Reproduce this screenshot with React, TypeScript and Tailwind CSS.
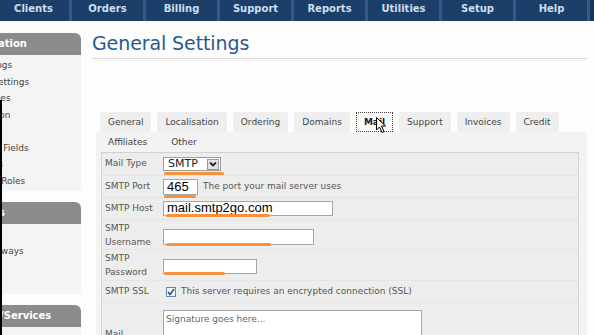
const navItems = ["Clients", "Orders", "Billing", "Support", "Reports", "Utilities", "Setup", "Help"]

const sections = [
  {
    title: "Configuration",
    items: [
      "General Settings",
      "Automation Settings",
      "Email Templates",
      "Fraud Protection",
      "Client Groups",
      "Custom Client Fields",
      "Administrators",
      "Administrator Roles",
    ],
  },
  { title: "Payments", items: ["Transactions", "Payment Gateways", "Gateway Log", "Tax Rules"] },
  { title: "Products/Services", items: ["Products", "Configurable Options"] },
]

const tabsTop = ["General", "Localisation", "Ordering", "Domains", "Mail", "Support", "Invoices", "Credit"]

function Underline({ className }: { className: string }) {
  return <span className={"absolute h-[3px] rounded-full bg-[#f7923a] " + className} />
}

export default function App() {
  return (
    <div className="relative h-[335px] w-[594px] overflow-hidden bg-[#fdfdfd] font-['DejaVu_Sans',sans-serif] text-[9px] text-[#555]">
      {/* top menu */}
      <nav className="-ml-[2px] flex h-[21px] bg-[#17355a]">
        {navItems.map((n) => (
          <div
            key={n}
            className="h-[21px] w-[74px] shrink-0 border-r-[3px] border-[#2f5b8a] bg-[#1c3f69] text-center text-[10px] font-bold leading-[17px] text-[#cddef1]"
          >
            {n}
          </div>
        ))}
      </nav>

      <div className="flex">
        {/* sidebar (cut off at the left edge) */}
        <aside className="w-[81px] shrink-0 overflow-hidden pt-[12px]">
          {sections.map((s) => (
            <div key={s.title} className="mb-[11px]">
              <div className="h-[22px] whitespace-nowrap rounded-tr-[6px] bg-[#8b8b8b] text-[10px] font-bold leading-[22px] text-white">
                <span className="-ml-[50px]">{s.title}</span>
              </div>
              <div className="rounded-br-[4px] bg-[#f4f4f4] py-[2px] shadow-[1px_0_1px_rgba(0,0,0,0.05)]">
                {s.items.map((it) => (
                  <div key={it} className="-ml-[63px] whitespace-nowrap leading-[16.5px] text-[#444]">
                    {it}
                  </div>
                ))}
              </div>
            </div>
          ))}
        </aside>

        {/* main */}
        <main className="ml-[11px] w-[495px] shrink-0 pt-[11px]">
          <h1 className="text-[19px] leading-[23px] tracking-[-0.1px] text-[#285a8e]">General Settings</h1>
          <div className="mt-[3px] h-[2px] border-t border-[#d9d9d9] shadow-[0_1px_2px_rgba(0,0,0,0.06)]" />

          {/* tabs row 1 */}
          <div className="mt-[52px] flex gap-[6px] pl-[8px]">
            {tabsTop.map((t) =>
              t === "Mail" ? (
                <div
                  key={t}
                  className="h-[20px] border border-dotted border-[#444] bg-[#fafafa] px-[7px] font-bold leading-[19px] text-[#222]"
                >
                  {t}
                </div>
              ) : (
                <div key={t} className="h-[20px] rounded-t-[2px] bg-[#efefef] px-[8px] leading-[21px] text-[#444]">
                  {t}
                </div>
              )
            )}
          </div>

          {/* panel */}
          <div className="ml-[4px] h-[220px] bg-[#f3f3f3] pr-[8px]">
            <div className="flex h-[20px] gap-[8px] pl-[4px] leading-[20px] text-[#444]">
              <div className="px-[8px]">Affiliates</div>
              <div className="px-[8px]">Other</div>
            </div>

            <div className="ml-[5px] border border-[#d2d2d2] bg-[#ededed]">
              {/* Mail Type */}
              <div className="flex h-[23px] items-center border-b border-[#e4e4e4]">
                <div className="w-[61px] pl-[3px]">Mail Type</div>
                <div className="relative flex h-[14px] w-[58px] items-center border border-[#9c9c9c] bg-white">
                  <span className="pl-[4px] text-[11px] leading-[14px] text-[#222]">SMTP</span>
                  <span className="ml-auto mr-[1px] flex h-[11px] w-[12px] items-center justify-center border border-[#999] bg-[#e2e2e2]">
                    <svg width="8" height="6" viewBox="0 0 8 6">
                      <path d="M1 1.5 L4 4.5 L7 1.5" fill="none" stroke="#222" strokeWidth="1.8" />
                    </svg>
                  </span>
                  <Underline className="-bottom-[5px] left-0 w-[60px]" />
                </div>
              </div>

              {/* SMTP Port */}
              <div className="flex h-[22px] items-center border-b border-[#e4e4e4]">
                <div className="w-[61px] pl-[3px]">SMTP Port</div>
                <div className="relative h-[16px] w-[35px] border border-[#a5a5a5] bg-white pl-[3px] font-['Liberation_Sans',sans-serif] text-[13px] leading-[14px] text-black">
                  465
                  <Underline className="-bottom-[4px] left-0 w-[32px]" />
                </div>
                <span className="ml-[5px]">The port your mail server uses</span>
              </div>

              {/* SMTP Host */}
              <div className="flex h-[22px] items-center border-b border-[#e4e4e4]">
                <div className="w-[61px] pl-[3px]">SMTP Host</div>
                <div className="relative h-[15px] w-[170px] border border-[#a5a5a5] bg-white pl-[3px] font-['Liberation_Sans',sans-serif] text-[13px] leading-[12px] text-black">
                  mail.smtp2go.com
                  <Underline className="-bottom-[2px] left-[2px] w-[104px]" />
                </div>
              </div>

              {/* SMTP Username */}
              <div className="flex h-[30px] items-center border-b border-[#e4e4e4]">
                <div className="w-[61px] pl-[3px] leading-[14px]">
                  SMTP
                  <br />
                  Username
                </div>
                <div className="relative mt-[4px] h-[16px] w-[151px] border border-[#a5a5a5] bg-white">
                  <Underline className="-bottom-[2px] left-[2px] w-[105px]" />
                </div>
              </div>

              {/* SMTP Password */}
              <div className="flex h-[31px] items-center border-b border-[#e4e4e4]">
                <div className="w-[61px] pl-[3px] leading-[14px]">
                  SMTP
                  <br />
                  Password
                </div>
                <div className="relative mt-[3px] h-[15px] w-[94px] border border-[#a5a5a5] bg-white">
                  <Underline className="-bottom-[2px] left-0 w-[61px]" />
                </div>
              </div>

              {/* SMTP SSL */}
              <div className="flex h-[22px] items-center border-b border-[#e4e4e4]">
                <div className="w-[61px] pl-[3px]">SMTP SSL</div>
                <span className="ml-[3px] flex h-[10px] w-[10px] items-center justify-center border border-[#6e84a3] bg-[#f4f6fa]">
                  <svg width="8" height="8" viewBox="0 0 8 8">
                    <path d="M1 4 L3 6.5 L7 1" fill="none" stroke="#2b4f96" strokeWidth="1.6" />
                  </svg>
                </span>
                <span className="ml-[5px]">This server requires an encrypted connection (SSL)</span>
              </div>

              {/* Mail Signature */}
              <div className="flex h-[60px] items-start pt-[7px]">
                <div className="w-[61px] pl-[3px] pt-[17px] leading-[14px]">
                  Mail
                  <br />
                  Signature
                </div>
                <div className="h-[60px] w-[259px] border border-[#a5a5a5] bg-white pl-[2px] pt-[2px] text-[#666]">
                  Signature goes here...
                </div>
              </div>
            </div>
          </div>
        </main>
      </div>

      {/* screen edge */}
      <div className="absolute bottom-0 left-0 top-[100px] w-[2px] bg-black" />

      {/* mouse pointer */}
      <svg className="absolute left-[376px] top-[117px]" width="11" height="17" viewBox="0 0 11 17">
        <path d="M0.5 0.5 L0.5 13 L3.5 10 L6 15.5 L8 14.5 L5.5 9 L9.5 9 Z" fill="#fff" stroke="#000" strokeWidth="1" />
      </svg>
    </div>
  )
}
